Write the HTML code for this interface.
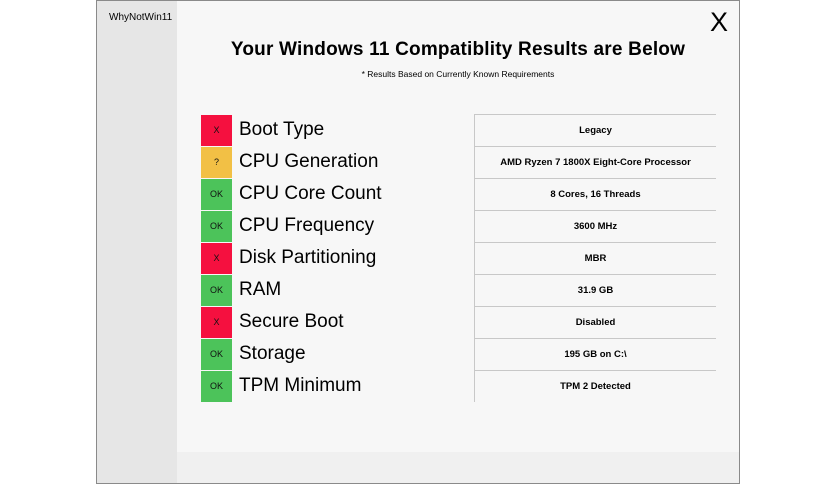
<!DOCTYPE html>
<html><head><style>
*{margin:0;padding:0;box-sizing:border-box}
body{width:836px;height:484px;background:#fff;position:relative;overflow:hidden;font-family:"Liberation Sans",sans-serif}
.win{position:absolute;left:96px;top:0;width:644px;height:484px;background:#f7f7f7;border:1px solid #8a8a8a}
.side{position:absolute;left:0;top:0;width:80px;height:100%;background:#e6e6e6}
.bottom{position:absolute;left:80px;right:0;top:451px;bottom:0;background:#f0f0f0}
.name{position:absolute;left:12px;top:11px;font-size:10px;color:#000}
.x{position:absolute;left:613px;top:6px;font-size:27px;color:#000}
.title{position:absolute;left:80px;right:0;top:38px;text-align:center;font-size:19px;font-weight:bold;color:#000;letter-spacing:0.2px}
.sub{position:absolute;left:80px;right:0;top:68px;text-align:center;font-size:8.5px;color:#000}
.row{position:absolute;left:104px;height:32px;width:516px}
.st{position:absolute;left:0;top:1px;width:31px;height:31px;font-size:9px;text-align:center;line-height:31px;color:#111}
.lbl{position:absolute;left:38px;top:5px;font-size:19px;color:#000}
.val{position:absolute;left:273px;top:0;width:242px;height:32px;border-left:1px solid #c8c8c8;border-top:1px solid #c8c8c8;background:#f7f7f7;text-align:center;line-height:31px;font-size:9.5px;font-weight:bold;color:#000}
.r{background:#f5103f}.g{background:#4cc35a}.y{background:#f2c045}
</style></head><body>
<div class="win">
<div class="side"></div><div class="bottom"></div>
<div class="name">WhyNotWin11</div>
<div class="x">X</div>
<div class="title">Your Windows 11 Compatiblity Results are Below</div>
<div class="sub">* Results Based on Currently Known Requirements</div>
<div class="row" style="top:113px"><div class="st r">X</div><div class="lbl">Boot Type</div><div class="val">Legacy</div></div>
<div class="row" style="top:145px"><div class="st y">?</div><div class="lbl">CPU Generation</div><div class="val">AMD Ryzen 7 1800X Eight-Core Processor</div></div>
<div class="row" style="top:177px"><div class="st g">OK</div><div class="lbl">CPU Core Count</div><div class="val">8 Cores, 16 Threads</div></div>
<div class="row" style="top:209px"><div class="st g">OK</div><div class="lbl">CPU Frequency</div><div class="val">3600 MHz</div></div>
<div class="row" style="top:241px"><div class="st r">X</div><div class="lbl">Disk Partitioning</div><div class="val">MBR</div></div>
<div class="row" style="top:273px"><div class="st g">OK</div><div class="lbl">RAM</div><div class="val">31.9 GB</div></div>
<div class="row" style="top:305px"><div class="st r">X</div><div class="lbl">Secure Boot</div><div class="val">Disabled</div></div>
<div class="row" style="top:337px"><div class="st g">OK</div><div class="lbl">Storage</div><div class="val">195 GB on C:\</div></div>
<div class="row" style="top:369px"><div class="st g">OK</div><div class="lbl">TPM Minimum</div><div class="val">TPM 2 Detected</div></div>
</div>
</body></html>
